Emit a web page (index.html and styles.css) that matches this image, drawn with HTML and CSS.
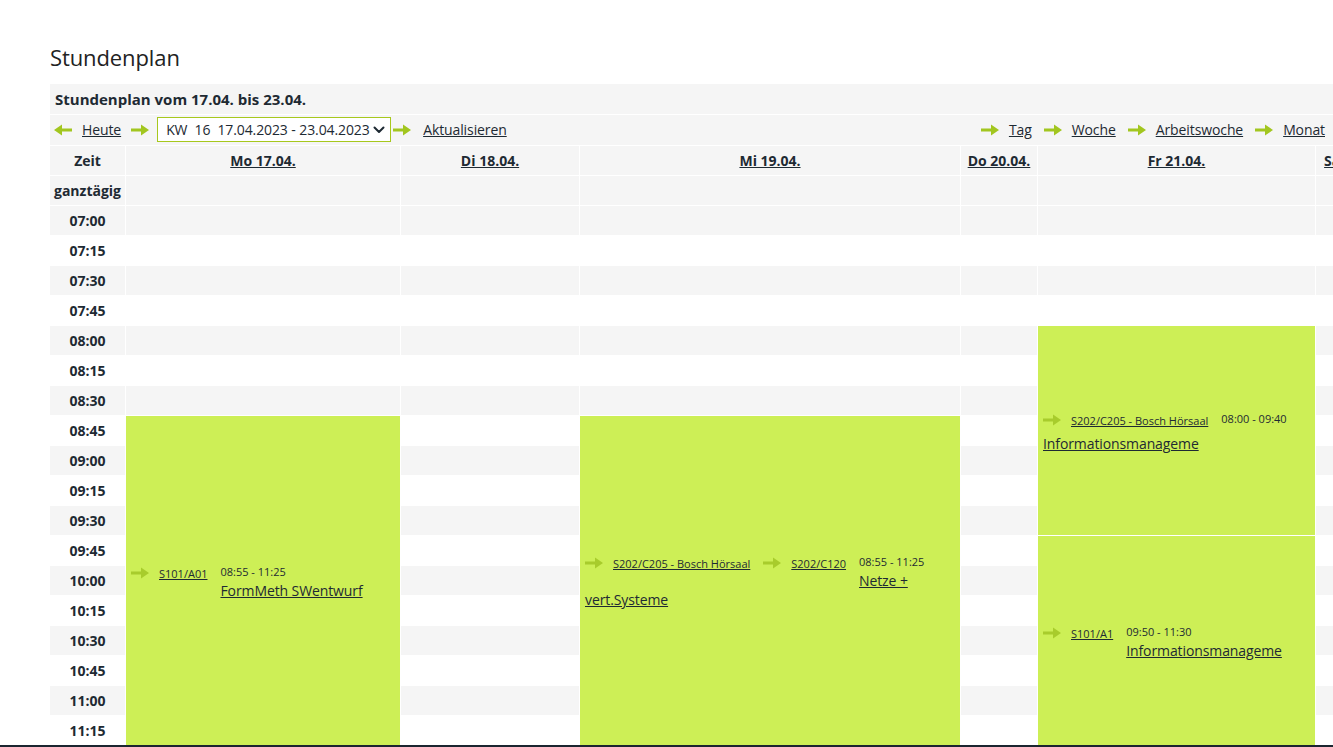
FILE: index.html
```html
<!DOCTYPE html>
<html lang="de">
<head>
<meta charset="utf-8">
<title>Stundenplan</title>
<link rel="stylesheet" href="styles.css">
</head>
<body>
<svg class="sprite" aria-hidden="true">
  <symbol id="arr" viewBox="0 0 18 12"><path d="M0 4.5H10V0.5L18 6L10 11.5V7.5H0Z"/></symbol>
</svg>

<h1 class="page-title">Stundenplan</h1>

<div class="plan">
  <div class="plan-caption">Stundenplan vom 17.04. bis 23.04.</div>
  <div class="plan-nav">
    <div class="nav-group">
      <svg class="arrow arrow-left"><use href="#arr"/></svg>
      <a class="nav-link nav-first" href="#">Heute</a>
      <svg class="arrow arrow-sel"><use href="#arr"/></svg>
      <div class="week-select"><span class="week-text">KW  16  17.04.2023 - 23.04.2023</span><svg class="chev" viewBox="0 0 12 8"><polyline points="1.5,1.5 6,6 10.5,1.5"/></svg></div>
      <svg class="arrow arrow-after"><use href="#arr"/></svg>
      <a class="nav-link" href="#">Aktualisieren</a>
    </div>
    <div class="nav-group">
      <svg class="arrow"><use href="#arr"/></svg>
      <a class="nav-link" href="#">Tag</a>
      <svg class="arrow"><use href="#arr"/></svg>
      <a class="nav-link" href="#">Woche</a>
      <svg class="arrow"><use href="#arr"/></svg>
      <a class="nav-link" href="#">Arbeitswoche</a>
      <svg class="arrow"><use href="#arr"/></svg>
      <a class="nav-link nav-last" href="#">Monat</a>
    </div>
  </div>

  <table class="grid">
    <colgroup>
      <col class="c-time"><col class="c-mo"><col class="c-di"><col class="c-mi"><col class="c-do"><col class="c-fr"><col class="c-sa"><col class="c-so">
    </colgroup>
    <thead>
      <tr class="shade">
        <th>Zeit</th>
        <th><a href="#">Mo 17.04.</a></th>
        <th><a href="#">Di 18.04.</a></th>
        <th><a href="#">Mi 19.04.</a></th>
        <th><a href="#">Do 20.04.</a></th>
        <th><a href="#">Fr 21.04.</a></th>
        <th><a href="#">Sa 22.04.</a></th>
        <th><a href="#">So 23.04.</a></th>
      </tr>
    </thead>
    <tbody>
      <tr class="shade"><th>ganztägig</th><td></td><td></td><td></td><td></td><td></td><td></td><td></td></tr>
      <tr class="shade"><th>07:00</th><td></td><td></td><td></td><td></td><td></td><td></td><td></td></tr>
      <tr><th>07:15</th><td></td><td></td><td></td><td></td><td></td><td></td><td></td></tr>
      <tr class="shade"><th>07:30</th><td></td><td></td><td></td><td></td><td></td><td></td><td></td></tr>
      <tr><th>07:45</th><td></td><td></td><td></td><td></td><td></td><td></td><td></td></tr>
      <tr class="shade"><th>08:00</th><td></td><td></td><td></td><td></td>
        <td class="event" rowspan="7"><div class="ev-body"><svg class="ev-arrow"><use href="#arr"/></svg><a class="ev-room" href="#">S202/C205 - Bosch Hörsaal</a><span class="ev-time">08:00 - 09:40</span><a class="ev-title" href="#">Informationsmanageme</a></div></td>
        <td></td><td></td></tr>
      <tr><th>08:15</th><td></td><td></td><td></td><td></td><td></td><td></td></tr>
      <tr class="shade"><th>08:30</th><td></td><td></td><td></td><td></td><td></td><td></td></tr>
      <tr><th>08:45</th>
        <td class="event" rowspan="11"><div class="ev-body"><svg class="ev-arrow"><use href="#arr"/></svg><a class="ev-room" href="#">S101/A01</a><span class="ev-time">08:55 - 11:25</span><a class="ev-title" href="#">FormMeth SWentwurf</a></div></td>
        <td></td>
        <td class="event" rowspan="11"><div class="ev-body"><svg class="ev-arrow"><use href="#arr"/></svg><a class="ev-room" href="#">S202/C205 - Bosch Hörsaal</a><svg class="ev-arrow"><use href="#arr"/></svg><a class="ev-room" href="#">S202/C120</a><span class="ev-time">08:55 - 11:25</span><a class="ev-title" href="#">Netze + vert.Systeme</a></div></td>
        <td></td><td></td><td></td></tr>
      <tr class="shade"><th>09:00</th><td></td><td></td><td></td><td></td></tr>
      <tr><th>09:15</th><td></td><td></td><td></td><td></td></tr>
      <tr class="shade"><th>09:30</th><td></td><td></td><td></td><td></td></tr>
      <tr><th>09:45</th><td></td><td></td>
        <td class="event" rowspan="7"><div class="ev-body"><svg class="ev-arrow"><use href="#arr"/></svg><a class="ev-room" href="#">S101/A1</a><span class="ev-time">09:50 - 11:30</span><a class="ev-title" href="#">Informationsmanageme</a></div></td>
        <td></td><td></td></tr>
      <tr class="shade"><th>10:00</th><td></td><td></td><td></td><td></td></tr>
      <tr><th>10:15</th><td></td><td></td><td></td><td></td></tr>
      <tr class="shade"><th>10:30</th><td></td><td></td><td></td><td></td></tr>
      <tr><th>10:45</th><td></td><td></td><td></td><td></td></tr>
      <tr class="shade"><th>11:00</th><td></td><td></td><td></td><td></td></tr>
      <tr><th>11:15</th><td></td><td></td><td></td><td></td></tr>
      <tr class="shade"><th>11:30</th><td></td><td></td><td></td><td></td><td></td><td></td><td></td></tr>
      <tr><th>11:45</th><td></td><td></td><td></td><td></td><td></td><td></td><td></td></tr>
    </tbody>
  </table>
</div>

<div class="bottom-rule"></div>
</body>
</html>
```

FILE: styles.css
```css
* { box-sizing: border-box; }

html, body { margin: 0; }

body {
  font-family: "Open Sans", "DejaVu Sans", sans-serif;
  color: #1e2a33;
  background: #fff;
  padding: 0 0 0 50px;
  height: 747px;
  overflow: hidden;
}

.sprite { display: none; }

a { color: inherit; text-decoration: underline; }

.page-title {
  margin: 0 0 12px;
  padding-top: 42px;
  font-size: 22px;
  font-weight: 400;
  line-height: 30px;
  letter-spacing: -0.1px;
  color: #222;
}

.plan-caption {
  height: 31px;
  line-height: 30px;
  padding-left: 5px;
  background: #f5f5f5;
  border-bottom: 1px solid #fff;
  font-size: 15px;
  font-weight: 700;
}

.plan-nav {
  height: 31px;
  display: flex;
  align-items: center;
  justify-content: space-between;
  padding: 0 8px 1px 4px;
  background: #f5f5f5;
  border-bottom: 1px solid #fff;
  font-size: 14px;
  letter-spacing: -0.1px;
}

.nav-group { display: flex; align-items: center; }

.arrow {
  width: 18px;
  height: 12px;
  fill: #a2c61f;
  margin-right: 10px;
  flex: none;
}

.arrow-left { transform: scaleX(-1); }

.nav-link { margin-right: 12px; line-height: 19px; }
.nav-link.nav-first { margin-right: 10px; }
.nav-link.nav-last { margin-right: 0; }

.arrow-sel { margin-right: 8px; }
.arrow-after { margin-left: 2px; margin-right: 12px; }

.week-select {
  width: 234px;
  height: 25px;
  display: flex;
  align-items: center;
  justify-content: space-between;
  padding: 0 5px 0 8px;
  background: #fff;
  border: 1px solid #a7c81d;
}

.week-text { white-space: pre; line-height: 19px; }

.chev {
  width: 12px;
  height: 8px;
  fill: none;
  stroke: #1e2a33;
  stroke-width: 2;
  stroke-linecap: round;
  stroke-linejoin: round;
}

/* timetable grid */
.grid {
  width: 1421px;
  table-layout: fixed;
  border-collapse: separate;
  border-spacing: 0;
  font-size: 14px;
  line-height: 19px;
}

.c-time { width: 75px; }
.c-mo { width: 275px; }
.c-di { width: 179px; }
.c-mi { width: 381px; }
.c-do { width: 77px; }
.c-fr { width: 278px; }
.c-sa { width: 77px; }
.c-so { width: 79px; }

.grid tr { height: 30px; }

.grid th,
.grid td {
  padding: 0;
  border-bottom: 1px solid #fff;
  text-align: center;
  vertical-align: middle;
  white-space: nowrap;
}

.grid th { font-weight: 700; }

.grid td,
.grid th + th { border-left: 1px solid #fff; }

.grid .shade th,
.grid .shade td { background: #f5f5f5; }

.grid td.event {
  background: #cdef56;
  text-align: left;
  white-space: normal;
  padding: 0 5px;
}

/* the large font-size with zero line-height only places the line strut
   a little above the baseline, so a wrapped title sits close to the room line */
.ev-body {
  font-size: 24px;
  line-height: 0;
  padding-top: 2px;
}

.ev-arrow {
  width: 18px;
  height: 12px;
  fill: #a8cc2c;
  vertical-align: 17px;
  margin-right: 10px;
}

.ev-room {
  font-size: 11px;
  line-height: 15px;
  vertical-align: 18px;
  margin-right: 13px;
}

.ev-time {
  display: inline-block;
  width: 0;
  white-space: nowrap;
  font-size: 11px;
  line-height: 15px;
  vertical-align: 20px;
}

.ev-title {
  font-size: 14px;
  line-height: 19px;
  letter-spacing: -0.1px;
}

.bottom-rule {
  position: fixed;
  left: 0;
  right: 0;
  bottom: 0;
  height: 2px;
  background: #1b2530;
}
```
